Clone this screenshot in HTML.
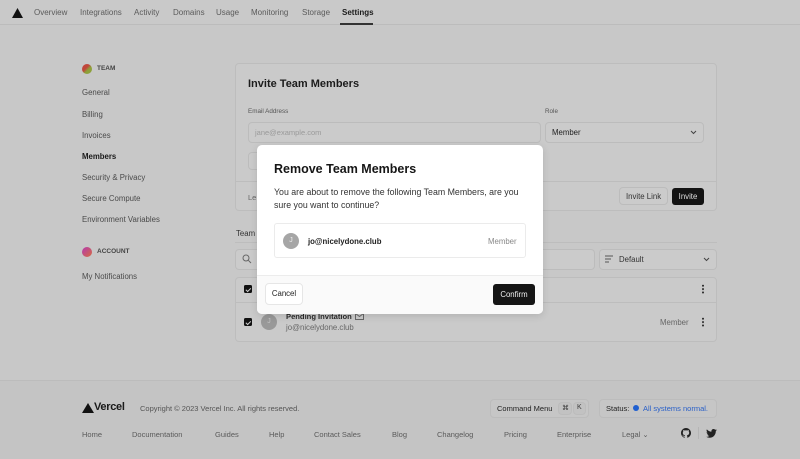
<!DOCTYPE html>
<html><head><meta charset="utf-8"><style>
*{box-sizing:border-box;margin:0;padding:0}
body{width:800px;height:459px;overflow:hidden;background:#c8c8c8;font-family:"Liberation Sans",sans-serif;color:#3a3a3a;position:relative;font-size:8px}
.a{position:absolute;white-space:nowrap}
.nav{position:absolute;left:0;top:0;width:800px;height:25px;border-bottom:1px solid #bcbcbc;background:#c9c9c9}
.nav span{position:absolute;top:8px;font-size:8px;color:#5a5a5a}
.side{font-size:7.8px;color:#4a4a4a}
.card{position:absolute;border:1px solid #bdbdbd;border-radius:4px;background:#cacaca}
.inp{position:absolute;border:1px solid #bcbcbc;border-radius:4px;background:#cbcbcb}
.footer{position:absolute;left:0;top:380px;width:800px;height:79px;background:#c4c4c4;border-top:1px solid #bcbcbc}
.fl{position:absolute;top:430px;font-size:7.5px;color:#5a5a5a}
.cb{position:absolute;width:8px;height:8px;background:#111;border-radius:1.5px}
.cb:after{content:"";position:absolute;left:2.5px;top:1.5px;width:2px;height:3.5px;border:solid #ccc;border-width:0 1px 1px 0;transform:rotate(45deg)}
.dots{position:absolute;width:2px;height:10px;background:radial-gradient(circle,#333 0.9px,transparent 1.1px) 0 0/2px 3.4px repeat-y}
</style></head><body>
<div class="nav">
<svg class="a" style="left:12px;top:8px" width="11" height="10" viewBox="0 0 11 10"><path d="M5.5 0L11 10H0Z" fill="#111"/></svg>
<span style="left:34px">Overview</span><span style="left:80px">Integrations</span><span style="left:134px">Activity</span><span style="left:173px">Domains</span><span style="left:216px">Usage</span><span style="left:251px">Monitoring</span><span style="left:302px">Storage</span><span style="left:342px;color:#1a1a1a;font-weight:bold">Settings</span>
<div class="a" style="left:340px;top:23px;width:33px;height:2px;background:#333"></div>
</div>
<div class="a" style="left:82px;top:64px;width:10px;height:10px;border-radius:50%;background:linear-gradient(135deg,#c0463b 40%,#8da13a 60%)"></div>
<div class="a" style="left:97px;top:65px;font-size:6.5px;color:#444;font-weight:bold">TEAM</div>
<div class="a side" style="left:82px;top:88px">General</div>
<div class="a side" style="left:82px;top:110px">Billing</div>
<div class="a side" style="left:82px;top:131px">Invoices</div>
<div class="a side" style="left:82px;top:152px;font-weight:bold;color:#1a1a1a">Members</div>
<div class="a side" style="left:82px;top:173px">Security &amp; Privacy</div>
<div class="a side" style="left:82px;top:194px">Secure Compute</div>
<div class="a side" style="left:82px;top:215px">Environment Variables</div>
<div class="a" style="left:82px;top:247px;width:10px;height:10px;border-radius:50%;background:linear-gradient(135deg,#b43ab0,#d66a40)"></div>
<div class="a" style="left:97px;top:248px;font-size:6.5px;color:#444;font-weight:bold">ACCOUNT</div>
<div class="a side" style="left:82px;top:272px">My Notifications</div>

<div class="card" style="left:235px;top:63px;width:482px;height:148px"></div>
<div class="a" style="left:235px;top:181px;width:482px;height:1px;background:#bdbdbd"></div>
<div class="a" style="left:248px;top:78px;font-size:11px;font-weight:bold;color:#1c1c1c">Invite Team Members</div>
<div class="a" style="left:248px;top:108px;font-size:6.3px;color:#555">Email Address</div>
<div class="a" style="left:545px;top:108px;font-size:6.3px;color:#555">Role</div>
<div class="inp" style="left:248px;top:122px;width:293px;height:21px"></div>
<div class="a" style="left:255px;top:128px;font-size:7.5px;color:#9a9a9a">jane@example.com</div>
<div class="inp" style="left:545px;top:122px;width:159px;height:21px"></div>
<div class="a" style="left:552px;top:128px;font-size:7.8px;color:#222">Member</div>
<svg class="a" style="left:690px;top:130px" width="7" height="5"><path d="M1 1l2.5 2.5L6 1" stroke="#444" fill="none"/></svg>
<div class="inp" style="left:248px;top:152px;width:20px;height:18px"></div>
<div class="a" style="left:248px;top:193px;font-size:7.5px;color:#666">Le</div>
<div class="inp" style="left:619px;top:187px;width:49px;height:18px"></div>
<div class="a" style="left:626px;top:192px;font-size:7.8px;color:#333">Invite Link</div>
<div class="a" style="left:672px;top:188px;width:32px;height:17px;background:#131313;border-radius:3px;color:#ddd;font-size:7.8px;text-align:center;line-height:17px">Invite</div>

<div class="a" style="left:236px;top:229px;font-size:7.8px;color:#333">Team</div>
<div class="a" style="left:235px;top:242px;width:482px;height:1px;background:#bdbdbd"></div>
<div class="inp" style="left:235px;top:249px;width:360px;height:21px"></div>
<svg class="a" style="left:242px;top:254px" width="10" height="10"><circle cx="4" cy="4" r="3" stroke="#666" fill="none"/><path d="M6.3 6.3L9 9" stroke="#666"/></svg>
<div class="inp" style="left:599px;top:249px;width:118px;height:21px"></div>
<svg class="a" style="left:605px;top:255px" width="9" height="8"><path d="M0 1h8M0 4h6M0 7h4" stroke="#555"/></svg>
<div class="a" style="left:619px;top:255px;font-size:7.8px;color:#333">Default</div>
<svg class="a" style="left:703px;top:257px" width="7" height="5"><path d="M1 1l2.5 2.5L6 1" stroke="#444" fill="none"/></svg>
<div class="card" style="left:235px;top:277px;width:482px;height:65px"></div>
<div class="a" style="left:235px;top:302px;width:482px;height:1px;background:#bdbdbd"></div>
<div class="cb" style="left:244px;top:285px"></div>
<div class="dots" style="left:702px;top:284px"></div>
<div class="cb" style="left:244px;top:318px"></div>
<div class="a" style="left:261px;top:314px;width:16px;height:16px;border-radius:50%;background:#999;color:#c6c6c6;font-size:7px;text-align:center;line-height:16px">J</div>
<div class="a" style="left:286px;top:312px;font-size:7.6px;font-weight:bold;color:#2a2a2a">Pending Invitation</div>
<svg class="a" style="left:355px;top:313px" width="9" height="7"><rect x="0.5" y="0.5" width="8" height="6" stroke="#666" fill="none"/><path d="M0.5 0.5l4 3 4-3" stroke="#666" fill="none"/></svg>
<div class="a" style="left:286px;top:323px;font-size:7.8px;color:#666">jo@nicelydone.club</div>
<div class="a" style="left:660px;top:318px;font-size:7.8px;color:#666">Member</div>
<div class="dots" style="left:702px;top:317px"></div>

<div class="footer"></div>
<svg class="a" style="left:82px;top:403px" width="12" height="10"><path d="M6 0L12 10H0Z" fill="#111"/></svg>
<div class="a" style="left:94px;top:401px;font-size:11px;color:#1a1a1a;font-weight:bold;letter-spacing:-0.3px">Vercel</div>
<div class="a" style="left:140px;top:404px;font-size:7.5px;color:#555">Copyright © 2023 Vercel Inc. All rights reserved.</div>
<div class="inp" style="left:490px;top:399px;width:99px;height:19px;background:#c6c6c6"></div>
<div class="a" style="left:497px;top:404px;font-size:7.5px;color:#222">Command Menu</div>
<div class="inp" style="left:558px;top:402px;width:14px;height:13px;background:#c2c2c2"></div><div class="a" style="left:562px;top:404px;font-size:7px">⌘</div>
<div class="inp" style="left:573px;top:402px;width:13px;height:13px;background:#c2c2c2"></div><div class="a" style="left:577px;top:404px;font-size:7px">K</div>
<div class="inp" style="left:599px;top:399px;width:118px;height:19px;background:#c6c6c6"></div>
<div class="a" style="left:606px;top:404px;font-size:7.5px;color:#222">Status:</div>
<div class="a" style="left:633px;top:405px;width:6px;height:6px;border-radius:50%;background:#1f5fd0"></div>
<div class="a" style="left:643px;top:404px;font-size:7.5px;color:#2a60c8">All systems normal.</div>
<div class="fl" style="left:82px">Home</div><div class="fl" style="left:132px">Documentation</div><div class="fl" style="left:215px">Guides</div><div class="fl" style="left:269px">Help</div><div class="fl" style="left:314px">Contact Sales</div><div class="fl" style="left:392px">Blog</div><div class="fl" style="left:437px">Changelog</div><div class="fl" style="left:504px">Pricing</div><div class="fl" style="left:557px">Enterprise</div><div class="fl" style="left:622px">Legal ⌄</div>
<svg class="a" style="left:681px;top:428px" width="10" height="10" viewBox="0 0 16 16"><path fill="#222" d="M8 0C3.6 0 0 3.6 0 8c0 3.5 2.3 6.5 5.5 7.6.4.1.5-.2.5-.4v-1.4c-2.2.5-2.7-1-2.7-1-.4-.9-.9-1.2-.9-1.2-.7-.5.1-.5.1-.5.8.1 1.2.8 1.2.8.7 1.2 1.9.9 2.3.7.1-.5.3-.9.5-1.1-1.8-.2-3.6-.9-3.6-4 0-.9.3-1.6.8-2.1-.1-.2-.4-1 .1-2.1 0 0 .7-.2 2.2.8.6-.2 1.3-.3 2-.3s1.4.1 2 .3c1.5-1 2.2-.8 2.2-.8.4 1.1.2 1.9.1 2.1.5.6.8 1.3.8 2.1 0 3.1-1.9 3.7-3.6 3.9.3.3.5.8.5 1.5v2.2c0 .2.1.5.6.4C13.7 14.5 16 11.5 16 8c0-4.4-3.6-8-8-8z"/></svg>
<div class="a" style="left:698px;top:427px;width:1px;height:12px;background:#b5b5b5"></div>
<svg class="a" style="left:706px;top:429px" width="11" height="9" viewBox="0 0 24 20"><path fill="#222" d="M24 2.4c-.9.4-1.8.7-2.8.8 1-.6 1.8-1.6 2.2-2.7-1 .6-2 1-3.1 1.2C19.3.7 18 0 16.6 0c-2.7 0-4.9 2.2-4.9 4.9 0 .4 0 .8.1 1.1C7.7 5.8 4.1 3.9 1.7.9c-.4.7-.7 1.6-.7 2.5 0 1.7.9 3.2 2.2 4.1-.8 0-1.6-.2-2.2-.6v.1c0 2.4 1.7 4.4 3.9 4.8-.4.1-.8.2-1.3.2-.3 0-.6 0-.9-.1.6 2 2.4 3.4 4.6 3.4-1.7 1.3-3.8 2.1-6.1 2.1-.4 0-.8 0-1.2-.1 2.2 1.4 4.8 2.2 7.5 2.2 9.1 0 14-7.5 14-14v-.6c1-.7 1.8-1.6 2.5-2.5z"/></svg>

<div class="a" style="left:257px;top:145px;width:286px;height:169px;background:#fff;border-radius:5px;box-shadow:0 2px 8px rgba(0,0,0,.12);overflow:hidden">
<div class="a" style="left:0;top:130px;width:286px;height:39px;background:#fafafa;border-top:1px solid #ececec"></div>
<div class="a" style="left:17px;top:17px;font-size:12.5px;font-weight:bold;color:#161616">Remove Team Members</div>
<div class="a" style="left:17px;top:41px;font-size:8.8px;color:#333;line-height:13px;white-space:normal;width:256px">You are about to remove the following Team Members, are you sure you want to continue?</div>
<div class="a" style="left:17px;top:78px;width:252px;height:35px;border:1px solid #ebebeb;border-radius:3px"></div>
<div class="a" style="left:26px;top:88px;width:16px;height:16px;border-radius:50%;background:#a6a6a6;color:#eee;font-size:7px;text-align:center;line-height:16px">J</div>
<div class="a" style="left:51px;top:92px;font-size:7.8px;font-weight:bold;color:#222">jo@nicelydone.club</div>
<div class="a" style="left:231px;top:92px;font-size:7.8px;color:#888">Member</div>
<div class="a" style="left:8px;top:138px;width:38px;height:22px;border:1px solid #e6e6e6;border-radius:4px;background:#fff;font-size:7.8px;color:#222;text-align:center;line-height:20px">Cancel</div>
<div class="a" style="left:236px;top:139px;width:42px;height:21px;border-radius:3px;background:#151515;color:#eee;font-size:7.8px;text-align:center;line-height:21px">Confirm</div>
</div>
</body></html>
